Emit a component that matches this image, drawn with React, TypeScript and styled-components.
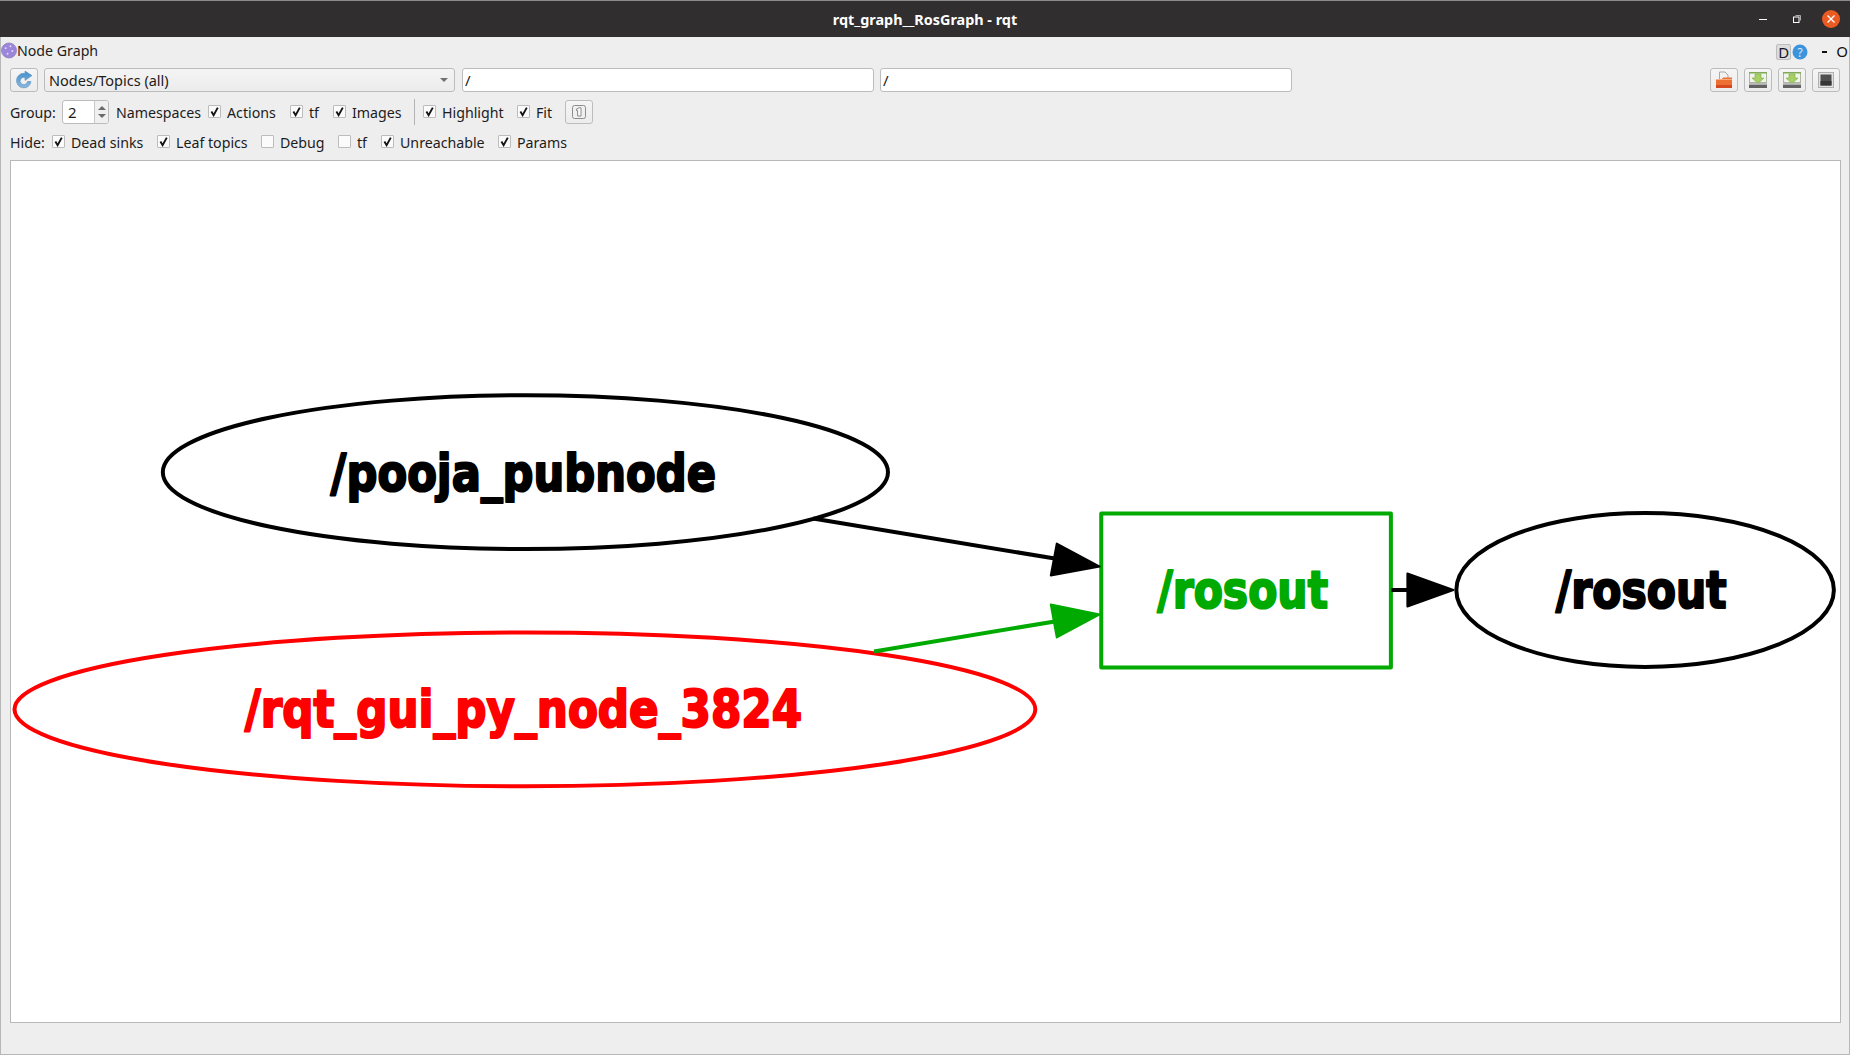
import styled, { createGlobalStyle } from 'styled-components'

const GlobalStyle = createGlobalStyle`
  html, body {
    margin: 0;
    padding: 0;
    height: 100%;
    overflow: hidden;
    background: #eeeeee;
  }
`

const Window = styled.div`
  width: 1850px;
  height: 1055px;
  box-sizing: border-box;
  display: flex;
  flex-direction: column;
  background: #eeeeee;
  border-left: 1px solid #b8b8b8;
  border-right: 1px solid #b8b8b8;
  border-bottom: 1px solid #b8b8b8;
  font-family: 'Noto Sans', 'Open Sans', sans-serif;
  font-size: 14px;
  color: #1c1c1c;
`

const TitleBar = styled.header`
  position: relative;
  height: 37px;
  margin: 0 -1px;
  flex: none;
  display: flex;
  align-items: center;
  justify-content: center;
  background: #302e2e;
  border-top: 1px solid #8a8a8a;
  box-sizing: border-box;
  color: #ffffff;
  font-family: 'Noto Sans', sans-serif;
  font-size: 14.4px;
  font-weight: 700;
`

const WindowControls = styled.div`
  position: absolute;
  right: 2px;
  top: 0;
  height: 36px;
  display: flex;
  align-items: center;
`

const ControlSlot = styled.div<{ $w: number }>`
  width: ${(p) => p.$w}px;
  height: 36px;
  display: flex;
  align-items: center;
  justify-content: center;
`

const Body = styled.main`
  flex: 1;
  min-height: 0;
  display: flex;
  flex-direction: column;
  padding: 0 9px 31px 9px;
`

const PluginHeader = styled.div`
  height: 27px;
  margin: 0 -9px;
  flex: none;
  display: flex;
  align-items: center;
  position: relative;
`

const PluginTitle = styled.span`
  font-size: 14.2px;
  line-height: 28px;
`

const PluginActions = styled.div`
  position: absolute;
  right: 1px;
  top: 6px;
  height: 17px;
  display: flex;
  align-items: center;
`

const HelpKey = styled.span`
  width: 15px;
  height: 16px;
  margin-right: 1px;
  box-sizing: border-box;
  display: flex;
  align-items: center;
  justify-content: center;
  background: #dcdcdc;
  border: 1px solid #bdbdbd;
  border-radius: 2px;
  color: #15152a;
  font-size: 15px;
`

const DashGlyph = styled.span`
  width: 5px;
  height: 2px;
  margin-left: 14px;
  background: #101010;
`

const ClosedGlyph = styled.span`
  margin-left: 9px;
  font-size: 15px;
  line-height: 17px;
  color: #101010;
`

const Toolbar = styled.div<{ $top: number }>`
  height: 24px;
  margin-top: ${(p) => p.$top}px;
  flex: none;
  display: flex;
  align-items: center;
`

const ToolButton = styled.button<{ $left?: number }>`
  width: 28px;
  height: 24px;
  margin: 0 0 0 ${(p) => p.$left ?? 0}px;
  padding: 0;
  flex: none;
  display: flex;
  align-items: center;
  justify-content: center;
  background: linear-gradient(#f5f5f5, #ececec);
  border: 1px solid #bcbcbc;
  border-radius: 3px;
`

const Combo = styled.div`
  width: 411px;
  height: 24px;
  margin-left: 6px;
  box-sizing: border-box;
  flex: none;
  display: flex;
  align-items: center;
  justify-content: space-between;
  padding: 0 6px 0 4px;
  background: linear-gradient(#f4f4f4, #ececec);
  border: 1px solid #bcbcbc;
  border-radius: 3px;
  font-size: 14.5px;
`

const ComboArrow = styled.span`
  width: 0;
  height: 0;
  border-left: 4px solid transparent;
  border-right: 4px solid transparent;
  border-top: 4px solid #707070;
`

const LineEdit = styled.div<{ $w: number; $left: number }>`
  width: ${(p) => p.$w}px;
  height: 24px;
  margin-left: ${(p) => p.$left}px;
  box-sizing: border-box;
  flex: none;
  padding: 0 2px;
  font-size: 15px;
  line-height: 23px;
  background: #ffffff;
  border: 1px solid #bcbcbc;
  border-radius: 3px;
`

const Spacer = styled.div`
  flex: 1;
`

const ToolGroup = styled.div`
  display: flex;
  gap: 6px;
`

const Label = styled.span<{ $w: number; $left?: number }>`
  width: ${(p) => p.$w}px;
  margin-left: ${(p) => p.$left ?? 0}px;
  flex: none;
  white-space: nowrap;
  font-size: 14.2px;
`

const SpinBox = styled.div`
  width: 47px;
  height: 24px;
  margin-left: 7px;
  box-sizing: border-box;
  flex: none;
  display: flex;
  background: #ffffff;
  border: 1px solid #bcbcbc;
  border-radius: 3px;
`

const SpinValue = styled.span`
  flex: 1;
  padding-left: 5px;
  font-size: 15px;
  line-height: 23px;
`

const SpinArrows = styled.span`
  width: 13px;
  display: flex;
  flex-direction: column;
  align-items: center;
  justify-content: center;
  gap: 4px;
  background: #f0f0f0;
  border-left: 1px solid #c8c8c8;
  border-radius: 0 2px 2px 0;
`

const SpinArrow = styled.span<{ $up?: boolean }>`
  width: 0;
  height: 0;
  border-left: 4px solid transparent;
  border-right: 4px solid transparent;
  border-${(p) => (p.$up ? 'bottom' : 'top')}: 4px solid #6a6a6a;
`

const Box = styled.span<{ $left: number }>`
  width: 13px;
  height: 13px;
  margin: -1px 6px 0 ${(p) => p.$left}px;
  box-sizing: border-box;
  flex: none;
  display: flex;
  align-items: center;
  justify-content: center;
  background: #fbfbfb;
  border: 1px solid #bcbcbc;
  border-radius: 1px;
`

const Divider = styled.span`
  width: 1px;
  height: 26px;
  margin-left: 14px;
  flex: none;
  background: #b4b4b4;
`

const Canvas = styled.section`
  flex: 1;
  min-height: 0;
  margin-top: 6px;
  margin-right: -1px;
  background: #ffffff;
  border: 1px solid #b8b8b8;
`

const Graph = styled.svg`
  display: block;
  width: 100%;
  height: 100%;
`

const GraphLabel = styled.text<{ $color: string }>`
  font-family: 'DejaVu Sans', sans-serif;
  font-weight: 700;
  font-size: 51px;
  text-anchor: middle;
  fill: ${(p) => p.$color};
  stroke: ${(p) => p.$color};
  stroke-width: 2.2px;
  stroke-linejoin: round;
`

const Check = ({ left, w, checked = true, children }: { left: number; w: number; checked?: boolean; children: string }) => (
  <>
    <Box $left={left}>
      {checked && (
        <svg width="11" height="11" viewBox="0 0 11 11">
          <path d="M2.4 5.6 L4.6 9.2 L8.8 1.6" fill="none" stroke="#141414" strokeWidth="1.9" />
        </svg>
      )}
    </Box>
    <Label $w={w}>{children}</Label>
  </>
)

const RefreshIcon = () => (
  <svg width="20" height="20" viewBox="0 0 20 20">
    <defs>
      <linearGradient id="refreshFill" x1="0" y1="0" x2="0" y2="1">
        <stop offset="0" stopColor="#3f8fd0" />
        <stop offset="1" stopColor="#8cb8dc" />
      </linearGradient>
    </defs>
    <path d="M17 11.5 A7.3 7.3 0 1 1 11 3.4 L11 1 L18 5.6 L11 10.4 L11 7.6 A3.6 3.6 0 1 0 13.4 11.5 Z" fill="url(#refreshFill)" stroke="#5f93bf" strokeWidth="0.6" />
  </svg>
)

const FolderIcon = () => (
  <svg width="18" height="18" viewBox="0 0 18 18">
    <path d="M4.5 1 H10 L13 4 V9 H4.5 Z" fill="#f2f2f2" stroke="#a8a8a8" />
    <path d="M1 8 H7 L8 6.5 H17 V17 H1 Z" fill="#ec6f34" />
    <rect x="1" y="14" width="16" height="3" fill="#d8481e" />
    <rect x="1" y="8" width="16" height="1" fill="#f8ad82" />
  </svg>
)

const SaveIcon = () => (
  <svg width="20" height="18" viewBox="0 0 20 18">
    <rect x="1.5" y="1.5" width="17" height="10" fill="#f2f4ec" stroke="#a9b89c" />
    <rect x="1" y="1" width="18" height="1.5" fill="#7faa58" />
    <path d="M7 3 H13 V7 H16 L10 12.5 L4 7 H7 Z" fill="#a6cf66" stroke="#7fa848" strokeWidth="0.6" />
    <rect x="1" y="12.5" width="18" height="4.5" fill="#626262" />
    <rect x="1" y="12.5" width="18" height="1.2" fill="#cfcfcf" />
  </svg>
)

const ScreenIcon = () => (
  <svg width="16" height="16" viewBox="0 0 16 16">
    <rect x="0.5" y="0.5" width="15" height="15" fill="#e2e2e2" stroke="#b0b0b0" />
    <rect x="2.5" y="2.5" width="11" height="11" fill="#505050" />
    <rect x="2.5" y="9" width="11" height="4.5" fill="#363636" />
  </svg>
)

const FirstIcon = () => (
  <svg width="16" height="16" viewBox="0 0 16 16">
    <rect x="1.5" y="1.5" width="13" height="13" rx="2" fill="#f0f0f0" stroke="#8c8c8c" />
    <path d="M5.5 5 L8 3.8 H10 V12 H6.6 V6.2 L5.5 6.6 Z" fill="#fbfbfb" stroke="#8c8c8c" />
  </svg>
)

const NodeIcon = () => (
  <svg width="16" height="17" viewBox="0 0 17 17">
    <circle cx="8.5" cy="8.5" r="8" fill="#9b86dc" stroke="#8b7fb4" strokeWidth="0.8" />
    <circle cx="5" cy="6" r="1" fill="#e4dcf8" />
    <circle cx="10" cy="4" r="1" fill="#e4dcf8" />
    <circle cx="12" cy="9" r="1" fill="#e4dcf8" />
    <circle cx="7" cy="12" r="1" fill="#e4dcf8" />
  </svg>
)

const HelpIcon = () => (
  <svg width="16" height="16" viewBox="0 0 16 16">
    <circle cx="8" cy="8" r="7.5" fill="#3d94dc" />
    <text x="8" y="12.5" textAnchor="middle" fontSize="12" fontFamily="'Noto Sans', sans-serif" fill="#d8ecfa">?</text>
  </svg>
)

const App = () => (
  <>
    <GlobalStyle />
    <Window>
      <TitleBar>
        rqt_graph__RosGraph - rqt
        <WindowControls>
          <ControlSlot $w={34}>
            <svg width="10" height="4" viewBox="0 0 10 4">
              <rect x="1" y="2" width="8" height="1" fill="#fff" />
            </svg>
          </ControlSlot>
          <ControlSlot $w={34}>
            <svg width="10" height="10" viewBox="0 0 10 10">
              <path d="M3.5 1.5 H8.5 V6.5" fill="none" stroke="#aaa" />
              <rect x="1.5" y="3" width="5.5" height="5.5" fill="none" stroke="#fff" />
            </svg>
          </ControlSlot>
          <ControlSlot $w={34}>
            <svg width="18" height="18" viewBox="0 0 18 18">
              <circle cx="9" cy="9" r="9" fill="#ea5a23" />
              <path d="M5.5 5.5 L12.5 12.5 M12.5 5.5 L5.5 12.5" stroke="#fff" strokeWidth="1.4" />
            </svg>
          </ControlSlot>
        </WindowControls>
      </TitleBar>
      <Body>
        <PluginHeader>
          <NodeIcon />
          <PluginTitle>Node Graph</PluginTitle>
          <PluginActions>
            <HelpKey>D</HelpKey>
            <HelpIcon />
            <DashGlyph />
            <ClosedGlyph>O</ClosedGlyph>
          </PluginActions>
        </PluginHeader>
        <Toolbar $top={4}>
          <ToolButton>
            <RefreshIcon />
          </ToolButton>
          <Combo>
            Nodes/Topics (all)
            <ComboArrow />
          </Combo>
          <LineEdit $w={412} $left={7}>/</LineEdit>
          <LineEdit $w={412} $left={6}>/</LineEdit>
          <Spacer />
          <ToolGroup>
            <ToolButton>
              <FolderIcon />
            </ToolButton>
            <ToolButton>
              <SaveIcon />
            </ToolButton>
            <ToolButton>
              <SaveIcon />
            </ToolButton>
            <ToolButton>
              <ScreenIcon />
            </ToolButton>
          </ToolGroup>
        </Toolbar>
        <Toolbar $top={8}>
          <Label $w={45}>Group:</Label>
          <SpinBox>
            <SpinValue>2</SpinValue>
            <SpinArrows>
              <SpinArrow $up />
              <SpinArrow />
            </SpinArrows>
          </SpinBox>
          <Label $w={84} $left={7}>Namespaces</Label>
          <Check left={8} w={50}>Actions</Check>
          <Check left={13} w={11}>tf</Check>
          <Check left={13} w={48}>Images</Check>
          <Divider />
          <Check left={8} w={61}>Highlight</Check>
          <Check left={14} w={16}>Fit</Check>
          <ToolButton $left={13}>
            <FirstIcon />
          </ToolButton>
        </Toolbar>
        <Toolbar $top={6}>
          <Label $w={35}>Hide:</Label>
          <Check left={7} w={72}>Dead sinks</Check>
          <Check left={14} w={72}>Leaf topics</Check>
          <Check left={13} w={44} checked={false}>Debug</Check>
          <Check left={14} w={11} checked={false}>tf</Check>
          <Check left={13} w={85}>Unreachable</Check>
          <Check left={13} w={49}>Params</Check>
        </Toolbar>
        <Canvas>
          <Graph viewBox="11 161 1829 862" preserveAspectRatio="xMinYMin meet">
            <g fill="none" strokeWidth="4">
              <ellipse cx="526" cy="472.5" rx="363" ry="77" stroke="#000" />
              <ellipse cx="525.5" cy="710" rx="511" ry="77" stroke="#ff0000" />
              <rect x="1102.5" y="514" width="290" height="154" stroke="#00aa00" strokeLinejoin="round" />
              <ellipse cx="1647" cy="590.5" rx="189" ry="77" stroke="#000" />
              <path d="M814 519 L1056 559" stroke="#000" />
              <path d="M875 652 L1056 622" stroke="#00aa00" />
              <path d="M1393 590.5 L1409 590.5" stroke="#000" />
            </g>
            <g strokeWidth="2" strokeLinejoin="round">
              <path d="M1058 544 L1052 576 L1101 567 Z" fill="#000" stroke="#000" />
              <path d="M1052 605 L1058 638 L1101 615 Z" fill="#00aa00" stroke="#00aa00" />
              <path d="M1409 574 L1409 607 L1455 590.5 Z" fill="#000" stroke="#000" />
            </g>
            <GraphLabel $color="#000000" x="524" y="491" textLength="386" lengthAdjust="spacingAndGlyphs">/pooja_pubnode</GraphLabel>
            <GraphLabel $color="#ff0000" x="524" y="728" textLength="558" lengthAdjust="spacingAndGlyphs">/rqt_gui_py_node_3824</GraphLabel>
            <GraphLabel $color="#00aa00" x="1244" y="609" textLength="171" lengthAdjust="spacingAndGlyphs">/rosout</GraphLabel>
            <GraphLabel $color="#000000" x="1643" y="609" textLength="171" lengthAdjust="spacingAndGlyphs">/rosout</GraphLabel>
          </Graph>
        </Canvas>
      </Body>
    </Window>
  </>
)

export default App
